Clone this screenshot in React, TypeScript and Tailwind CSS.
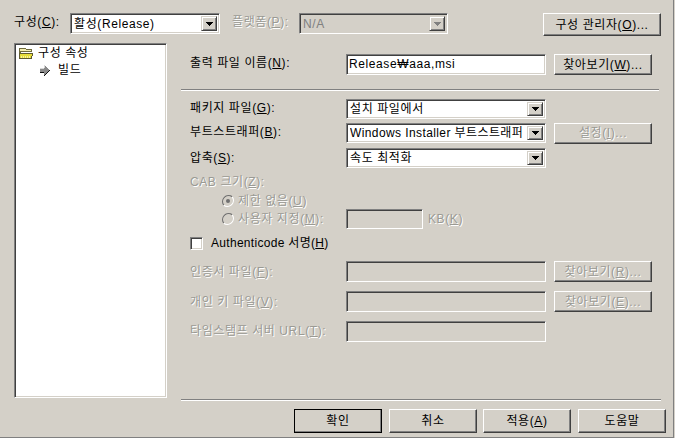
const font = "font-['Liberation_Sans','Noto_Sans_CJK_KR',sans-serif]";

function U({ children }: { children: string }) {
  return <span className="underline underline-offset-1">{children}</span>;
}

function Label({ text, u, tail = "):", off, className = "" }: { text: string; u: string; tail?: string; off?: boolean; className?: string }) {
  return (
    <span className={`whitespace-nowrap text-[12px] leading-[14px] ${off ? "text-[#9a9a94] [text-shadow:1px_1px_0_#ffffff]" : "text-black"} ${className}`}>
      {text}(<U>{u}</U>{tail}
    </span>
  );
}

const sunken = "border border-t-[#808080] border-l-[#808080] border-r-white border-b-white shadow-[inset_1px_1px_0_#404040,inset_-1px_-1px_0_#d4d0c8]";

function Field({ text, off, className = "" }: { text?: string; off?: boolean; className?: string }) {
  return (
    <div className={`${sunken} ${off ? "bg-[#d4d0c8] text-[#808080]" : "bg-white text-black"} flex items-center pl-[2px] text-[12px] leading-[14px] overflow-hidden whitespace-nowrap ${className}`}>
      {text}
    </div>
  );
}

function Select({ text, off, className = "" }: { text: string; off?: boolean; className?: string }) {
  return (
    <div className={`${sunken} ${off ? "bg-[#d4d0c8] text-[#808080]" : "bg-white text-black"} flex items-center justify-between p-[2px] pl-[3px] text-[12px] leading-[14px] ${className}`}>
      <span className="overflow-hidden whitespace-nowrap min-w-0">{text}</span>
      <span className="flex h-full w-[16px] shrink-0 items-center justify-center bg-[#d4d0c8] border border-t-[#d4d0c8] border-l-[#d4d0c8] border-r-[#404040] border-b-[#404040] shadow-[inset_1px_1px_0_#ffffff,inset_-1px_-1px_0_#808080]">
        <svg width="7" height="4" viewBox="0 0 7 4" shapeRendering="crispEdges">
          <path d="M0 0h7v1h-1v1h-1v1h-1v1h-1v-1h-1v-1h-1v-1h-1z" fill={off ? "#808080" : "#000000"} />
        </svg>
      </span>
    </div>
  );
}

function Btn({ children, off, primary, className = "" }: { children: React.ReactNode; off?: boolean; primary?: boolean; className?: string }) {
  return (
    <div className={`flex items-center justify-center whitespace-nowrap bg-[#d4d0c8] text-[12px] leading-[14px] ${off ? "text-[#9a9a94] [text-shadow:1px_1px_0_#ffffff]" : "text-black"} ${primary ? "outline outline-1 -outline-offset-1 outline-black" : ""} border border-t-white border-l-white border-r-[#404040] border-b-[#404040] shadow-[inset_-1px_-1px_0_#808080] ${className}`}>
      {children}
    </div>
  );
}

function Rule({ className = "" }: { className?: string }) {
  return <div className={`h-[2px] border-t border-t-[#808080] border-b border-b-white ${className}`} />;
}

function FolderIcon() {
  return (
    <svg width="16" height="13" viewBox="0 0 16 13" shapeRendering="crispEdges" className="shrink-0">
      <path d="M2 1h5l1 1h5v2H3L1 8V2z" fill="#f3eeb0" stroke="#6f6a3c" strokeWidth="1" />
      <path d="M1.5 11.5V6.5h13l-1 5z" fill="#e6dc3a" stroke="#5f5a30" strokeWidth="1" />
      <path d="M3 9h9M3 10h9" stroke="#f7f2a0" strokeWidth="1" strokeDasharray="1 1" />
    </svg>
  );
}

function ArrowIcon() {
  return (
    <svg width="10" height="11" viewBox="0 0 10 11" shapeRendering="crispEdges" className="shrink-0">
      <path d="M4 0h1v1h1v1h1v1h1v1h1v1h1v1H9v1H8v1H7v1H6v1H5v1H4V8H0V3h4z" fill="#8a8a8a" />
      <path d="M4 0h1v3H4zM0 3h4v1H0z" fill="#d8d8d8" />
      <path d="M5 11V10h1V9h1V8h1V7h1V6h1V5H9v1H8v1H7v1H6v1H5v1H4v1zM0 7h4v1H0z" fill="#111111" />
    </svg>
  );
}

function Radio({ on }: { on?: boolean }) {
  return (
    <svg width="12" height="12" viewBox="0 0 12 12" className="shrink-0">
      <path d="M10.2 1.8A6 6 0 0 0 1.8 10.2" fill="none" stroke="#707070" strokeWidth="1.2" />
      <path d="M1.8 10.2A6 6 0 0 0 10.2 1.8" fill="none" stroke="#ffffff" strokeWidth="1.2" />
      <circle cx="6" cy="6" r="4.4" fill="#d4d0c8" />
      {on && <circle cx="6" cy="6" r="2" fill="#707070" />}
    </svg>
  );
}

function Row({ children, className = "" }: { children: React.ReactNode; className?: string }) {
  return <div className={`flex items-center ${className}`}>{children}</div>;
}

export default function App() {
  return (
    <div className="h-[438px] w-[675px] overflow-hidden bg-[#d4d0c8] pr-[1px]">
      <div className={`${font} flex h-full flex-col border-b border-r border-b-[#808080] border-r-[#808080] pl-[14px] pt-[13px] tracking-[0.6px]`}>
        <Row className="h-[23px] items-start">
          <Label text="구성" u="C" className="mt-[2px] w-[56px]" />
          <Select text="활성(Release)" className="h-[21px] w-[150px]" />
          <Label text="플랫폼" u="P" off className="ml-[12px] mt-[2px] w-[67px]" />
          <Select text="N/A" off className="h-[21px] w-[149px]" />
          <Btn className="ml-[95px] h-[23px] w-[118px]">구성 관리자(<U>O</U>)...</Btn>
        </Row>

        <div className="mt-[7px] flex items-start">
          <div className={`${sunken} h-[355px] w-[153px] shrink-0 bg-white pl-[3px] pt-[2px] text-[12px] leading-[14px] text-black`}>
            <Row className="gap-[4px]"><FolderIcon /><span>구성 속성</span></Row>
            <Row className="ml-[22px] mt-[3px] gap-[8px]"><ArrowIcon /><span>빌드</span></Row>
          </div>

          <div className="ml-[14px] w-[481px] shrink-0">
            <Row className="ml-[9px] mt-[11px] h-[21px]">
              <Label text="출력 파일 이름" u="N" className="mb-[3px] w-[156px]" />
              <Field text="Release₩aaa,msi" className="h-[21px] w-[200px] pb-[2px]" />
              <Btn className="ml-[8px] h-[21px] w-[98px]">찾아보기(<U>W</U>)...</Btn>
            </Row>
            <Rule className="mt-[14px] w-[478px]" />

            <Row className="ml-[9px] mt-[8px] h-[20px]">
              <Label text="패키지 파일" u="G" className="mb-[3px] w-[156px]" />
              <Select text="설치 파일에서" className="h-[20px] w-[200px]" />
            </Row>
            <Row className="ml-[9px] mt-[4px] h-[20px]">
              <Label text="부트스트래퍼" u="B" className="mb-[2px] w-[156px]" />
              <Select text="Windows Installer 부트스트래퍼" className="h-[20px] w-[200px] tracking-[0.4px]" />
              <Btn off className="ml-[8px] h-[21px] w-[98px]">설정(<U>I</U>)...</Btn>
            </Row>
            <Row className="ml-[9px] mt-[5px] h-[20px]">
              <Label text="압축" u="S" className="w-[156px]" />
              <Select text="속도 최적화" className="h-[20px] w-[200px]" />
            </Row>
            <Row className="ml-[9px] mt-[7px] h-[14px]">
              <Label text="CAB 크기" u="Z" off />
            </Row>
            <Row className="ml-[41px] mt-[5px] h-[14px] gap-[4px]">
              <Radio on />
              <Label text="제한 없음" u="U" tail=")" off />
            </Row>
            <Row className="ml-[41px] mt-[1px] h-[20px]">
              <Radio />
              <Label text="사용자 지정" u="M" off className="ml-[4px] w-[108px]" />
              <Field off className="h-[20px] w-[77px]" />
              <Label text="KB" u="K" tail=")" off className="ml-[5px]" />
            </Row>
            <Row className="ml-[9px] mt-[6px] h-[16px] gap-[8px]">
              <div className={`${sunken} h-[13px] w-[13px] bg-white`} />
              <span className="text-[12px] leading-[14px] tracking-[0.3px] text-black">Authenticode 서명(<U>H</U>)</span>
            </Row>
            <Row className="ml-[9px] mt-[10px] h-[21px]">
              <Label text="인증서 파일" u="F" off className="w-[156px]" />
              <Field off className="h-[21px] w-[200px]" />
              <Btn off className="ml-[8px] h-[21px] w-[98px]">찾아보기(<U>R</U>)...</Btn>
            </Row>
            <Row className="ml-[9px] mt-[9px] h-[21px]">
              <Label text="개인 키 파일" u="V" off className="w-[156px]" />
              <Field off className="h-[21px] w-[200px]" />
              <Btn off className="ml-[8px] h-[21px] w-[98px]">찾아보기(<U>E</U>)...</Btn>
            </Row>
            <Row className="ml-[9px] mt-[9px] h-[21px]">
              <Label text="타임스탬프 서버 URL" u="T" off className="mb-[2px] w-[156px]" />
              <Field off className="h-[21px] w-[200px]" />
            </Row>
            <Rule className="mt-[57px] w-[480px]" />
          </div>
        </div>

        <div className="mt-[8px] flex pl-[280px]">
          <Btn primary className="h-[24px] w-[88px]">확인</Btn>
          <Btn className="ml-[7px] h-[24px] w-[88px]">취소</Btn>
          <Btn className="ml-[6px] h-[24px] w-[88px]">적용(<U>A</U>)</Btn>
          <Btn className="ml-[7px] h-[24px] w-[88px]">도움말</Btn>
        </div>
      </div>
    </div>
  );
}
